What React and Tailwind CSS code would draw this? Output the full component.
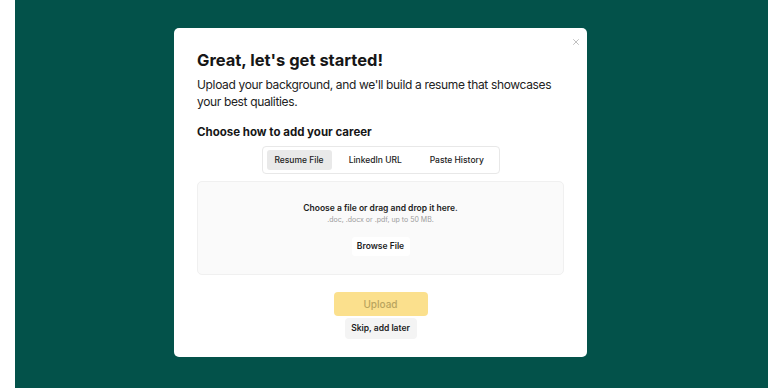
import { X } from 'lucide-react'

const tabs = ['Resume File', 'LinkedIn URL', 'Paste History']

export default function App() {
  return (
    <div className="h-[388px] w-[783px] bg-white px-[15px]" style={{ fontFamily: 'Inter, "Noto Sans", sans-serif' }}>
      <div className="h-full bg-[#03524a] pl-[159px] pt-[28px]">
        {/* Modal */}
        <div className="relative h-[329px] w-[413px] rounded-[5px] bg-white px-[23px] pt-[19px]">
          <button className="absolute right-[6px] top-[9px] text-[#9a9a9a]">
            <X size={10} strokeWidth={1.5} />
          </button>
          <h1 className="text-[16.5px] font-bold leading-[26px] text-[#161616]">Great, let's get started!</h1>
          <p className="mt-[3px] whitespace-nowrap text-[12px] leading-[17px] tracking-[-0.35px] text-[#222]">
            Upload your background, and we'll build a resume that showcases
            <br />
            your best qualities.
          </p>
          <h2 className="mt-[14px] text-[11.5px] font-bold leading-[16px] text-[#161616]">Choose how to add your career</h2>

          <div className="mt-[6px] flex justify-center">
            <div className="flex h-[28px] w-[238px] items-center gap-[6px] rounded-[4px] border border-[#e8e8e8] px-[4px]">
              {tabs.map((tab, i) => (
                <div
                  key={tab}
                  className={`flex h-[20px] items-center justify-center rounded-[3px] text-[8.5px] font-medium text-[#222] ${i === 0 ? 'w-[65px] bg-[#e9e9e9]' : 'flex-1'}`}
                >
                  {tab}
                </div>
              ))}
            </div>
          </div>

          <div className="mt-[7px] flex h-[94px] flex-col items-center rounded-[5px] border border-[#f0f0f0] bg-[#fafafa] pt-[20px]">
            <p className="text-[8.5px] font-semibold leading-[12px] text-[#1c1c1c]">Choose a file or drag and drop it here.</p>
            <p className="mt-[1px] text-[7px] leading-[10px] text-[#9c9c9c]">.doc, .docx or .pdf, up to 50 MB.</p>
            <button className="mt-[12px] h-[19px] w-[58px] rounded-[3px] bg-white text-[8.5px] font-semibold text-[#1c1c1c]">
              Browse File
            </button>
          </div>

          <div className="mt-[17px] flex flex-col items-center gap-[2px]">
            <button className="h-[24px] w-[94px] rounded-[4px] bg-[#fbe08d] text-[10px] font-medium text-[#b9a45e]">Upload</button>
            <button className="h-[21px] w-[72px] rounded-[4px] bg-[#f4f4f4] text-[8.5px] font-semibold text-[#222]">Skip, add later</button>
          </div>
        </div>
      </div>
    </div>
  )
}
